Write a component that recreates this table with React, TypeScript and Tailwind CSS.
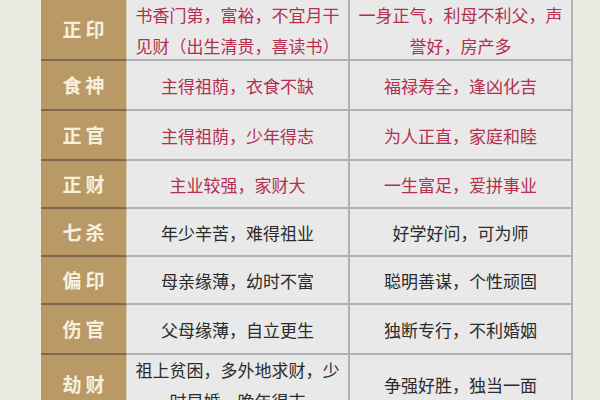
/**
 * ShiShenTable - 十神 (ten gods) meaning chart, cropped view
 */

type Row = {
    name: string;
    early: string[];
    trait: string[];
    red: boolean;
    h: string;
};

const rows: Row[] = [
    { name: '正印', early: ['书香门第，富裕，不宜月干', '见财（出生清贵，喜读书）'], trait: ['一身正气，利母不利父，声', '誉好，房产多'], red: true, h: 'h-[61px]' },
    { name: '食神', early: ['主得祖荫，衣食不缺'], trait: ['福禄寿全，逢凶化吉'], red: true, h: 'h-[50px]' },
    { name: '正官', early: ['主得祖荫，少年得志'], trait: ['为人正直，家庭和睦'], red: true, h: 'h-[50px]' },
    { name: '正财', early: ['主业较强，家财大'], trait: ['一生富足，爱拼事业'], red: true, h: 'h-[48px]' },
    { name: '七杀', early: ['年少辛苦，难得祖业'], trait: ['好学好问，可为师'], red: false, h: 'h-[48px]' },
    { name: '偏印', early: ['母亲缘薄，幼时不富'], trait: ['聪明善谋，个性顽固'], red: false, h: 'h-[48px]' },
    { name: '伤官', early: ['父母缘薄，自立更生'], trait: ['独断专行，不利婚姻'], red: false, h: 'h-[50px]' },
    { name: '劫财', early: ['祖上贫困，多外地求财，少', '时早婚，晚年得志'], trait: ['争强好胜，独当一面'], red: false, h: 'h-[61px]' },
];

function Lines({ lines }: { lines: string[] }) {
    return (
        <>
            {lines.map((l, i) => (
                <div key={i}>{l}</div>
            ))}
        </>
    );
}

export default function App() {
    return (
        <div className="w-[600px] h-[400px] overflow-hidden bg-[#ecebe2] pl-[41px] font-['Noto_Sans_CJK_SC',sans-serif]">
            <div className="w-[532px] flex flex-col">
                {rows.map((row) => (
                    <div key={row.name} className={`flex ${row.h} shrink-0`}>
                        {/* Left: header cell */}
                        <div className="w-[86px] shrink-0 flex items-center justify-center bg-[#b99a66] border-b-2 border-[#7e6a4a] border-r border-r-[#d9cdb4] text-[#f8f0de] text-[19px] font-bold tracking-[4px] pl-[4px]">
                            {row.name}
                        </div>

                        {/* Middle: early life */}
                        <div
                            className={`w-[223px] shrink-0 flex flex-col items-center justify-center bg-[#e9e9ea] border-b-2 border-r-2 border-[#b1b1b3] text-[17px] leading-[31px] text-center ${
                                row.red ? 'text-[#b42f4e]' : 'text-[#2b2b2b]'
                            }`}
                        >
                            <Lines lines={row.early} />
                        </div>

                        {/* Right: character */}
                        <div
                            className={`w-[223px] shrink-0 flex flex-col items-center justify-center bg-[#e9e9ea] border-b-2 border-r-2 border-[#b1b1b3] text-[17px] leading-[31px] text-center ${
                                row.red ? 'text-[#b42f4e]' : 'text-[#2b2b2b]'
                            }`}
                        >
                            <Lines lines={row.trait} />
                        </div>
                    </div>
                ))}
            </div>
        </div>
    );
}
